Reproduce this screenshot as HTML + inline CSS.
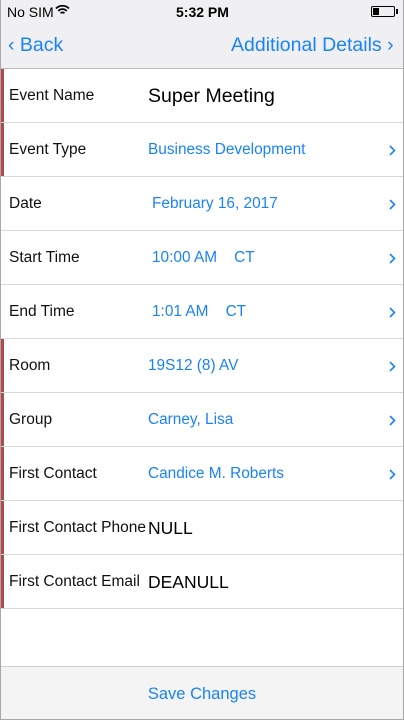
<!DOCTYPE html>
<html><head><style>
*{margin:0;padding:0;box-sizing:border-box}
body{width:404px;height:720px;overflow:hidden;font-family:"Liberation Sans",sans-serif;background:#fff;position:relative}
.frame{position:absolute;inset:0;border:1px solid #a8a8a8;border-top:none}
.hdr{position:absolute;left:0;top:0;width:404px;height:69px;background:#f0f0f2;border-bottom:1px solid #bdbdbd}
.sb{position:absolute;top:4px;font-size:14px;color:#000}
.nav{position:absolute;top:34px;font-size:19.5px;color:#1a82fb}
.row{position:absolute;left:1px;width:402px;height:54px;border-bottom:1px solid #d9d9d9}
.row.r::before{content:"";position:absolute;left:0;top:0;width:3px;height:53px;background:#b04a4a}
.lbl{position:absolute;left:8px;top:18px;font-size:15.5px;color:#111}
.val{position:absolute;top:18px;font-size:15.4px;color:#1a82fb}
.big{position:absolute;left:147px;top:16px;font-size:19.5px;color:#000}
.chev{position:absolute;left:388px;top:22px;width:7px;height:11px}
.ft{position:absolute;left:1px;top:666px;width:402px;height:53px;background:#f4f4f4;border-top:1px solid #cfcfcf;text-align:center;font-size:16.5px;color:#1a82fb;padding-top:18px}
</style></head><body>
<div class="hdr">
<div class="sb" style="left:7px">No SIM</div>
<svg style="position:absolute;left:55px;top:4px" width="15" height="12" viewBox="0 0 15 12"><path d="M1 4.5a9 9 0 0 1 13 0M3.3 7a5.7 5.7 0 0 1 8.4 0M5.6 9.3a2.4 2.4 0 0 1 3.8 0" stroke="#000" stroke-width="1.8" fill="none"/></svg>
<div class="sb" style="left:176px;font-weight:bold">5:32 PM</div>
<div style="position:absolute;left:371px;top:6px;width:24px;height:11px;border:1px solid #000;border-radius:2px"><div style="width:6px;height:7px;margin:1px;background:#000"></div></div>
<div style="position:absolute;left:396px;top:9px;width:2px;height:5px;background:#000"></div>
<div class="nav" style="left:8px">&#8249; Back</div>
<div class="nav" style="left:231px">Additional Details &#8250;</div>
</div>
<svg width="0" height="0" style="position:absolute"><defs><path id="c" d="M1 1l4.5 4.5L1 10" stroke="#1a82fb" stroke-width="1.6" fill="none"/></defs></svg>
<div class="row r" style="top:69px"><div class="lbl">Event Name</div><div class="big">Super Meeting</div></div>
<div class="row r" style="top:123px"><div class="lbl">Event Type</div><div class="val" style="left:147px">Business Development</div><svg class="chev"><use href="#c"/></svg></div>
<div class="row" style="top:177px"><div class="lbl">Date</div><div class="val" style="left:151px">February 16, 2017</div><svg class="chev"><use href="#c"/></svg></div>
<div class="row" style="top:231px"><div class="lbl">Start Time</div><div class="val" style="left:151px">10:00 AM &nbsp;&nbsp; CT</div><svg class="chev"><use href="#c"/></svg></div>
<div class="row" style="top:285px"><div class="lbl">End Time</div><div class="val" style="left:151px">1:01 AM &nbsp;&nbsp; CT</div><svg class="chev"><use href="#c"/></svg></div>
<div class="row r" style="top:339px"><div class="lbl">Room</div><div class="val" style="left:147px">19S12 (8) AV</div><svg class="chev"><use href="#c"/></svg></div>
<div class="row r" style="top:393px"><div class="lbl">Group</div><div class="val" style="left:147px">Carney, Lisa</div><svg class="chev"><use href="#c"/></svg></div>
<div class="row r" style="top:447px"><div class="lbl">First Contact</div><div class="val" style="left:147px">Candice M. Roberts</div><svg class="chev"><use href="#c"/></svg></div>
<div class="row r" style="top:501px"><div class="lbl">First Contact Phone</div><div class="big" style="font-size:17.5px;top:17px">NULL</div></div>
<div class="row r" style="top:555px"><div class="lbl">First Contact Email</div><div class="big" style="font-size:17.5px;top:17px">DEANULL</div></div>
<div class="ft">Save Changes</div>
<div class="frame"></div>
</body></html>
